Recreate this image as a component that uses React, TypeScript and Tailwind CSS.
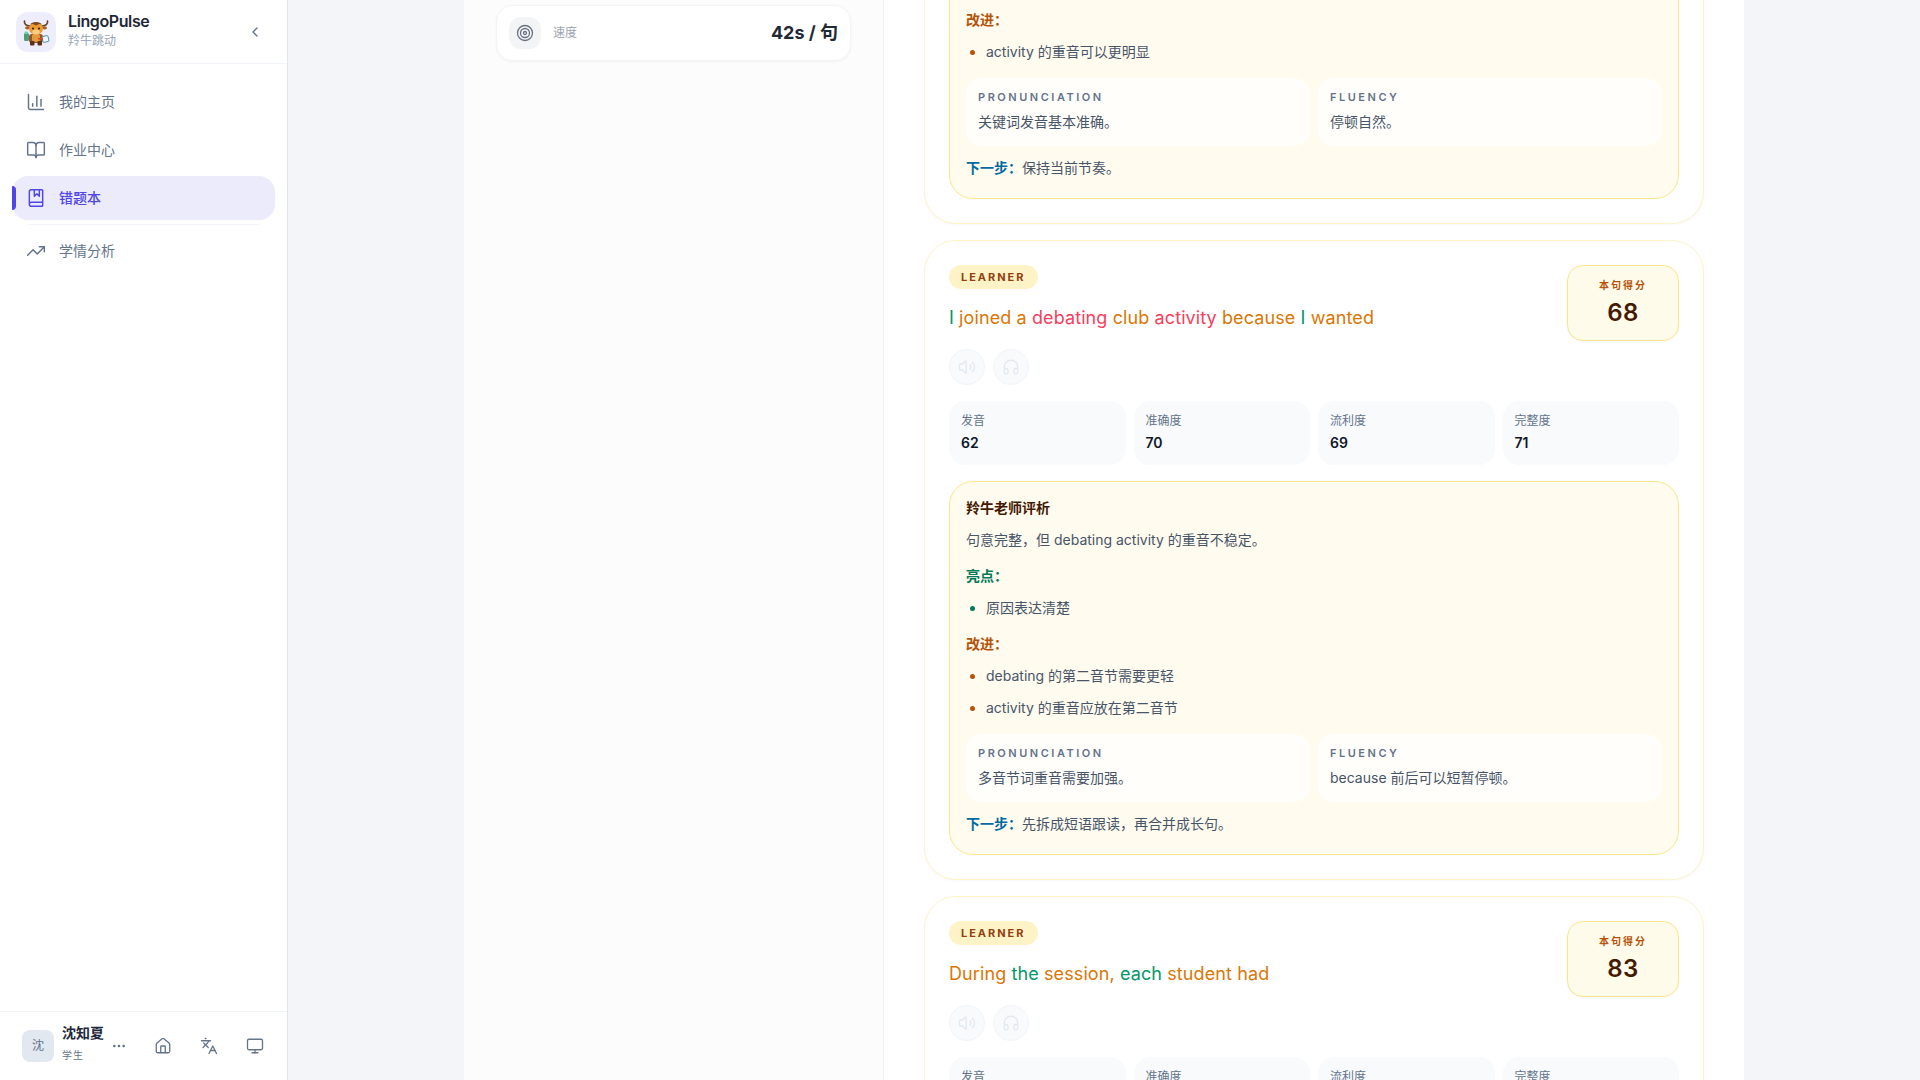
import React from 'react';
import {
  BookMarked,
  BookOpen,
  ChartColumn,
  ChevronLeft,
  Ellipsis,
  Headphones,
  House,
  Languages,
  Monitor,
  Target,
  TrendingUp,
  Volume2,
} from 'lucide-react';

type Tone = 'g' | 'o' | 'r';

const toneClass: Record<Tone, string> = {
  g: 'text-[#059669]',
  o: 'text-[#d97706]',
  r: 'text-[#f43f5e]',
};

const Mascot = () => (
  <svg width="40" height="40" viewBox="0 0 40 40" aria-hidden="true">
    <path d="M8.5 9c-.6 3 1.8 5 5.5 5" fill="none" stroke="#6b4423" strokeWidth="1.7" strokeLinecap="round" />
    <path d="M31.5 9c.6 3-1.8 5-5.500 5" fill="none" stroke="#6b4423" strokeWidth="1.7" strokeLinecap="round" />
    <ellipse cx="11.500" cy="16" rx="2.500" ry="1.400" fill="#a5602a" />
    <ellipse cx="28.500" cy="16" rx="2.500" ry="1.400" fill="#a5602a" />
    <rect x="13" y="22" width="14" height="9" rx="3" fill="#9a4f28" />
    <rect x="16" y="22" width="8" height="8" rx="2" fill="#e39a3b" />
    <rect x="14" y="29" width="4.500" height="4.500" rx="1" fill="#5b3119" />
    <rect x="21.500" y="29" width="4.500" height="4.500" rx="1" fill="#5b3119" />
    <ellipse cx="20" cy="16.500" rx="7" ry="6.500" fill="#ec9a2f" />
    <path d="M14 12.500c2-3.500 10-3.500 12 0-2-1-3.500-.6-6 1-2.500-1.600-4-2-6-1z" fill="#7a4a22" />
    <ellipse cx="20" cy="20" rx="3.800" ry="2.500" fill="#f8cf85" />
    <circle cx="17" cy="16.500" r="1" fill="#2d1a0e" />
    <circle cx="23" cy="16.500" r="1" fill="#2d1a0e" />
    <rect x="8" y="21" width="5" height="8" rx="1.500" fill="#4a9e7c" />
    <rect x="8.500" y="19.500" width="3.500" height="2.500" rx="1" fill="#6fcfb0" />
    <rect x="26.500" y="24" width="6" height="6" rx="1" fill="#eef7fb" stroke="#4d8aa3" strokeWidth="0.9" transform="rotate(-14 29.500 27)" />
    <rect x="22" y="26" width="5" height="1.500" fill="#c9472f" />
  </svg>
);

const NavItem = ({ icon: Icon, label, active }: { icon: typeof House; label: string; active?: boolean }) => (
  <div
    className={`relative flex h-11 items-center gap-[13px] rounded-2xl pl-[14px] text-sm ${
      active ? 'bg-[#ecebfb] font-medium text-[#4f46e5] shadow-[0_1px_2px_rgba(0,0,0,0.02)]' : 'text-[#64748b]'
    }`}
  >
    {active && <span className="absolute top-2.5 left-0 h-6 w-1 rounded-r-full bg-[#4f46e5]" />}
    <Icon size={20} strokeWidth={1.75} />
    <span>{label}</span>
  </div>
);

const Sidebar = () => (
  <aside className="flex w-[288px] shrink-0 flex-col border-r border-[#dfe5ee] bg-white">
    <div className="flex h-16 shrink-0 items-center border-b border-[#f1f5f9] pr-6 pl-4">
      <div className="h-10 w-10 overflow-hidden rounded-xl bg-[#eeedfb]">
        <Mascot />
      </div>
      <div className="ml-3 flex-1 pb-1">
        <div className="text-base leading-[23px] font-semibold tracking-[-0.025em] text-[#1f2937]">LingoPulse</div>
        <div className="text-xs leading-4 text-[#94a3b8]">羚牛跳动</div>
      </div>
      <ChevronLeft size={16} className="text-[#64748b]" />
    </div>

    <nav className="flex flex-1 flex-col gap-1 px-3 pt-4">
      <NavItem icon={ChartColumn} label="我的主页" />
      <NavItem icon={BookOpen} label="作业中心" />
      <NavItem icon={BookMarked} label="错题本" active />
      <div className="mx-4 h-px bg-[#f1f5f9]" />
      <NavItem icon={TrendingUp} label="学情分析" />
    </nav>

    <div className="flex h-[69px] shrink-0 items-center border-t border-[#f1f5f9] pl-[22px]">
      <div className="flex h-8 w-8 items-center justify-center rounded-lg bg-[#e2e8f0] text-xs text-[#64748b]">沈</div>
      <div className="ml-2 w-[41px] pb-1.5">
        <div className="text-sm leading-5 font-semibold whitespace-nowrap text-[#1e293b]">沈知夏</div>
        <div className="mt-1 text-[10px] leading-4 tracking-[0.1em] text-[#64748b]">学生</div>
      </div>
      <div className="flex items-center text-[#64748b]">
        <span className="flex h-8 w-8 items-center justify-center">
          <Ellipsis size={16} />
        </span>
        <span className="ml-3 flex h-8 w-8 items-center justify-center">
          <House size={18} strokeWidth={1.75} />
        </span>
        <span className="ml-3.5 flex h-8 w-8 items-center justify-center">
          <Languages size={18} strokeWidth={1.75} />
        </span>
        <span className="ml-3.5 flex h-8 w-8 items-center justify-center">
          <Monitor size={18} strokeWidth={1.75} />
        </span>
      </div>
    </div>
  </aside>
);

const Points = ({ title, items, color }: { title: string; items: string[]; color: 'green' | 'amber' }) => (
  <div className="mt-4 first:mt-0">
    <div className={`font-semibold ${color === 'green' ? 'text-[#047857]' : 'text-[#b45309]'}`}>{title}</div>
    <ul className={`mt-3 list-disc space-y-3 pl-5 text-[#475569] ${color === 'green' ? 'marker:text-[#047857]' : 'marker:text-[#b45309]'}`}>
      {items.map((item) => (
        <li key={item}>{item}</li>
      ))}
    </ul>
  </div>
);

const Note = ({ label, text }: { label: string; text: string }) => (
  <div className="rounded-2xl bg-[#fffefa] px-3 pt-[11px] pb-[13px]">
    <div className="text-[11px] leading-4 font-semibold tracking-[0.23em] text-[#64748b]">{label}</div>
    <div className="mt-1.5 text-sm leading-[22px] text-[#475569]">{text}</div>
  </div>
);

type Review = {
  summary?: string;
  good?: string[];
  improve: string[];
  pronunciation: string;
  fluency: string;
  next: string;
};

const ReviewBox = ({ review, clipped }: { review: Review; clipped?: boolean }) => (
  <div className={`rounded-3xl border border-[#fde68a] bg-[#fffbef] px-4 pb-5 text-sm leading-5 ${clipped ? 'pt-12' : 'mt-4 pt-4'}`}>
    {review.summary && (
      <>
        <div className="font-semibold text-[#451a03]">羚牛老师评析</div>
        <p className="mt-3 mb-4 text-[#475569]">{review.summary}</p>
      </>
    )}
    {review.good && <Points title="亮点：" items={review.good} color="green" />}
    <Points title="改进：" items={review.improve} color="amber" />
    <div className="mt-4 grid grid-cols-2 gap-2">
      <Note label="PRONUNCIATION" text={review.pronunciation} />
      <Note label="FLUENCY" text={review.fluency} />
    </div>
    <p className="mt-3 text-[#475569]">
      <span className="font-semibold text-[#0369a1]">下一步：</span>
      {review.next}
    </p>
  </div>
);

const Metric = ({ label, value }: { label: string; value: number }) => (
  <div className="rounded-2xl bg-[#f8fafc] p-3">
    <div className="text-xs leading-4 text-[#64748b]">{label}</div>
    <div className="mt-1 text-sm leading-5 font-semibold text-[#0f172a]">{value}</div>
  </div>
);

const RoundButton = ({ icon: Icon }: { icon: typeof House }) => (
  <span className="flex h-9 w-9 items-center justify-center rounded-full border border-[#f1f5f9] bg-[#f8fafc] text-[#e2e8f0]">
    <Icon size={18} strokeWidth={1.75} />
  </span>
);

type Sentence = {
  words: [string, Tone][];
  score: number;
  metrics: number[];
  review?: Review;
};

const SentenceCard = ({ words, score, metrics, review }: Sentence) => (
  <div className="rounded-[32px] border border-[#fef3c7] bg-white p-6 shadow-[0_1px_3px_rgba(0,0,0,0.03)]">
    <div className="flex items-start justify-between gap-4">
      <div className="min-w-0 flex-1">
        <span className="flex h-6 w-fit items-center rounded-full bg-[#fef3c7] px-3 text-[11px] font-bold tracking-[0.18em] text-[#92400e]">
          LEARNER
        </span>
        <p className="mt-[13px] text-lg leading-8 tracking-[0.1px]">
          {words.map(([word, tone], i) => (
            <span key={i} className={toneClass[tone]}>
              {word}{' '}
            </span>
          ))}
        </p>
        <div className="mt-[15px] flex gap-2">
          <RoundButton icon={Volume2} />
          <RoundButton icon={Headphones} />
        </div>
      </div>
      <div className="flex h-[76px] w-28 shrink-0 flex-col items-center justify-center rounded-2xl border border-[#fde68a] bg-[#fffbeb] shadow-[0_1px_3px_rgba(0,0,0,0.03)]">
        <div className="text-[10px] leading-4 font-semibold tracking-[0.2em] text-[#b45309]">本句得分</div>
        <div className="mt-1 text-2xl leading-8 font-semibold tracking-[0.02em] text-[#451a03]">{score}</div>
      </div>
    </div>
    <div className="mt-4 grid grid-cols-4 gap-2">
      {['发音', '准确度', '流利度', '完整度'].map((label, i) => (
        <Metric key={label} label={label} value={metrics[i]} />
      ))}
    </div>
    {review && <ReviewBox review={review} />}
  </div>
);

const second: Sentence = {
  words: [
    ['I', 'g'],
    ['joined', 'o'],
    ['a', 'o'],
    ['debating', 'r'],
    ['club', 'o'],
    ['activity', 'r'],
    ['because', 'o'],
    ['I', 'g'],
    ['wanted', 'o'],
  ],
  score: 68,
  metrics: [62, 70, 69, 71],
  review: {
    summary: '句意完整，但 debating activity 的重音不稳定。',
    good: ['原因表达清楚'],
    improve: ['debating 的第二音节需要更轻', 'activity 的重音应放在第二音节'],
    pronunciation: '多音节词重音需要加强。',
    fluency: 'because 前后可以短暂停顿。',
    next: '先拆成短语跟读，再合并成长句。',
  },
};

const third: Sentence = {
  words: [
    ['During', 'o'],
    ['the', 'g'],
    ['session,', 'o'],
    ['each', 'g'],
    ['student', 'o'],
    ['had', 'o'],
  ],
  score: 83,
  metrics: [80, 85, 82, 84],
};

export default function App() {
  return (
    <div className="flex h-screen overflow-hidden bg-[#f4f5f8] font-[Inter,'Noto_Sans_CJK_SC',sans-serif]">
      <Sidebar />
      <main className="min-w-0 flex-1 overflow-hidden">
        <div className="mx-auto flex h-full w-[1280px] bg-white">
          {/* summary column */}
          <div className="w-[420px] shrink-0 border-r border-[#f3f4f6] bg-[#fcfcfc] px-8 pt-[5px]">
            <div className="flex h-14 items-center rounded-2xl border border-[#f3f4f6] bg-white px-3 shadow-[0_1px_3px_rgba(0,0,0,0.04)]">
              <span className="flex h-8 w-8 items-center justify-center rounded-xl bg-[#f3f4f6] text-[#6b7280]">
                <Target size={18} strokeWidth={1.75} />
              </span>
              <span className="ml-3 flex-1 text-xs text-[#9ca3af]">速度</span>
              <span className="text-lg font-bold text-[#1f2937]">42s / 句</span>
            </div>
          </div>

          {/* sentence list, scrolled down past the first card's top */}
          <div className="min-w-0 flex-1 px-10">
            <div className="-mt-[64px] flex flex-col gap-4">
              <div className="rounded-[32px] border border-[#fef3c7] bg-white p-6 shadow-[0_1px_3px_rgba(0,0,0,0.03)]">
                <ReviewBox
                  clipped
                  review={{
                    improve: ['activity 的重音可以更明显'],
                    pronunciation: '关键词发音基本准确。',
                    fluency: '停顿自然。',
                    next: '保持当前节奏。',
                  }}
                />
              </div>
              <SentenceCard {...second} />
              <SentenceCard {...third} />
            </div>
          </div>
        </div>
      </main>
    </div>
  );
}
